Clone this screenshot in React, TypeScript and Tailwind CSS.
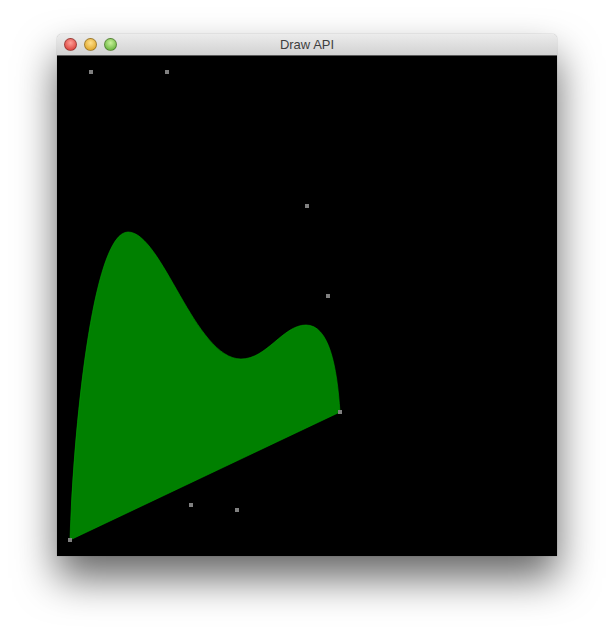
import React from 'react';

const points: [number, number][] = [
  [32, 14],
  [108, 14],
  [248, 148],
  [269, 238],
  [281, 354],
  [132, 447],
  [178, 452],
  [11, 482],
];

const shape =
  'M13 484 C16 380 35 176 71 176 C105 176 138 303 184 303 C210 303 226 269 249 269 C272 269 280 310 283 356 L13 484 Z';

const Light = ({ from, to }: { from: string; to: string }) => (
  <span
    className="w-[13px] h-[13px] rounded-full border border-black/30"
    style={{ background: `radial-gradient(circle at 50% 35%, ${from}, ${to})` }}
  />
);

export default function App() {
  return (
    <div className="w-[614px] h-[636px] bg-white pt-[34px] pl-[57px]">
      <div className="w-[500px] flex flex-col rounded-t-[5px] shadow-[0_22px_40px_rgba(0,0,0,0.6),0_0_1px_rgba(0,0,0,0.5)]">
        <div className="relative h-[22px] flex items-center rounded-t-[5px] bg-gradient-to-b from-[#ececec] to-[#d2d2d2] border-b border-[#5a5a5a]">
          <div className="flex gap-[7px] pl-[7px] items-center">
            <Light from="#ff9f97" to="#d4302a" />
            <Light from="#ffe08a" to="#d99a17" />
            <Light from="#c8f29a" to="#56a82a" />
          </div>
          <span className="absolute inset-0 flex items-center justify-center text-[13px] text-[#3f3f3f] font-['Liberation_Sans',Arial,sans-serif]">
            Draw API
          </span>
        </div>
        <div className="h-[500px] bg-black">
          <svg width="500" height="500" viewBox="0 0 500 500">
            <path d={shape} fill="#008000" stroke="#00a000" strokeWidth="0.6" />
            {points.map(([x, y], i) => (
              <rect key={i} x={x} y={y} width="4" height="4" fill="#808080" />
            ))}
          </svg>
        </div>
      </div>
    </div>
  );
}
